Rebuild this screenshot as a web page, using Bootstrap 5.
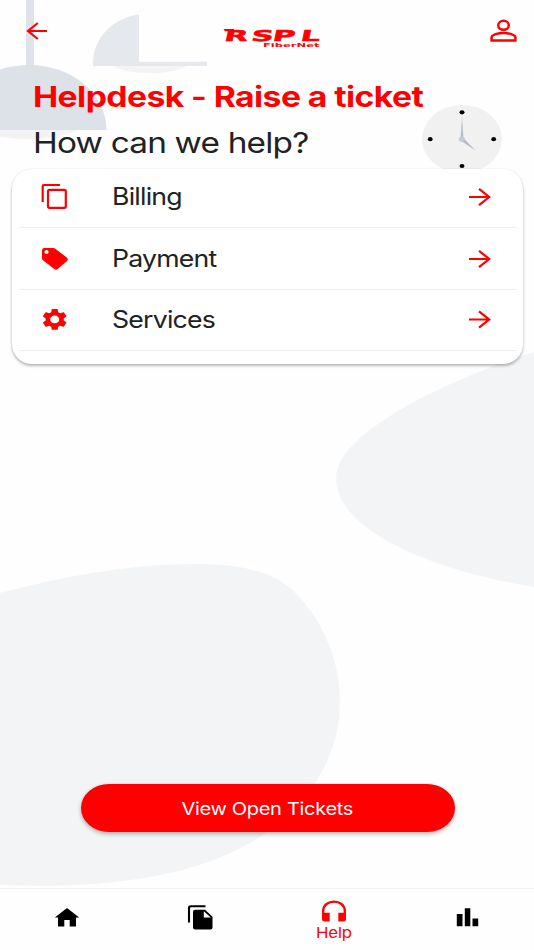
<!DOCTYPE html>
<html lang="en">
<head>
<meta charset="utf-8">
<meta name="viewport" content="width=device-width, initial-scale=1">
<title>Helpdesk</title>
<link href="https://cdn.jsdelivr.net/npm/bootstrap@5.3.0/dist/css/bootstrap.min.css" rel="stylesheet">
<style>
body{font-family:Inter,"Liberation Sans",sans-serif;color:#212323;background:#fefefe}
.screen{height:950px;overflow:hidden}
.backdrop{z-index:0}
.layer{z-index:1}
svg{display:block;flex:none}
.wide{display:inline-block;white-space:nowrap;transform-origin:0 50%}
.brand-red{color:#f00}
.topbar{height:76px;padding:19px 17px 0 25px}
.logo{margin-left:4px;margin-top:6px}
.page-title{font-size:28.5px;line-height:42px;font-weight:700;height:42px;letter-spacing:-.5px;transform:scaleX(1.183)}
.page-sub{font-size:29px;line-height:50px;height:50px;letter-spacing:-.7px;transform:scaleX(1.15)}
.titles{padding-left:32.500px;height:93px}
.panel{margin:0 11px 0 12px;height:195px;border-radius:20px;background:#fff;box-shadow:0 2px 3px rgba(0,0,0,.27),0 0 2px rgba(0,0,0,.1);overflow:hidden;padding:0 7px}
.panel .list-group{margin-top:-2.500px}
.panel .topic{height:61.5px;border:0;border-bottom:1px solid #efefef;border-radius:0;padding:1px 25px 0 20px;background:transparent;color:#212323}
.topic-icon{width:73px}
.topic-name{font-size:24px;letter-spacing:-.7px;transform:scaleX(1.11)}
.spacer{height:420px}
.open-btn{width:374px;height:48px;margin-left:80.5px;border-radius:28px/24px;background:#f00;color:#fff;box-shadow:0 2px 4px rgba(0,0,0,.3);border:0;padding:2px 0 0}
.open-btn:hover{background:#e60000;color:#fff}
.open-btn .wide{font-size:17.6px;letter-spacing:-.3px;transform-origin:50% 50%;transform:scaleX(1.14)}
.tabs{height:62px;margin-top:56px;background:#fefefe;border-top:1.5px solid #f3f3f3}
.tabs a{color:#000;text-decoration:none;padding-top:15px}
.tabs .help-tab{color:#f00;padding-top:1px}
.help-label{font-size:15px;line-height:18px;letter-spacing:-.2px;transform-origin:50% 50%;transform:scaleX(1.12)}
</style>
</head>
<body>
<div class="screen position-relative">
  <svg class="backdrop position-absolute top-0 start-0" width="534" height="950" viewBox="0 0 534 950">
    <ellipse cx="28" cy="117" rx="62" ry="22" fill="#f3f3f3"/>
    <path d="M26 0H34V66H26Z" fill="#dee3e9"/>
    <path d="M-49 130C-49 94-15 65 29 65C72 65 106.500 94 106.500 130Z" fill="#dde2e9"/>
    <path d="M112 65C125 76 175 76 188 65Z" fill="#f4f4f4"/>
    <path d="M139 14.500V61.700H207V66H93C92 39 112 18 139 14.500Z" fill="#e5e9ee"/>
    <ellipse cx="462" cy="139" rx="40" ry="34" fill="#f1f1f1"/>
    <ellipse cx="462" cy="112.300" rx="2.500" ry="2.100"/><ellipse cx="430.200" cy="139.200" rx="2.400" ry="2.100"/>
    <ellipse cx="493.700" cy="139.200" rx="2.400" ry="2.100"/><ellipse cx="462" cy="166" rx="2.500" ry="2.100"/>
    <path d="M462 116L463.400 138L475.500 150.500L460.500 140.500Z" fill="#b4bdc9"/>
    <ellipse cx="461.800" cy="139.200" rx="3" ry="2.700" fill="#c3cbd4"/>
    <path d="M534 352C470 372 336 428 336 478C336 530 430 570 534 587Z" fill="#f3f4f6"/>
    <path d="M0 593C60 577 130 564 195 564C245 564 273 573 291 589C320 615 340 657 340 702C340 760 305 811 250 843C190 878 100 889 0 885Z" fill="#f3f4f6"/>
  </svg>

  <div class="layer position-relative">
    <header class="topbar d-flex justify-content-between align-items-start">
      <a href="#" aria-label="Back"><svg width="24" height="24" viewBox="0 0 24 24" fill="none" stroke="#f00" stroke-width="2.200"><path d="M22 12H3M12.800 4L3 12L12.800 20"/></svg></a>
      <svg class="logo" width="100" height="24" viewBox="0 0 100 24" fill="#f00" font-family="DejaVu Sans,sans-serif" font-weight="700">
        <text transform="translate(1.500 15.500) skewX(-12) scale(2.050 1)" x="0 13.200 23.500 37.200" y="0" font-size="15" stroke="#f00" stroke-width=".5">RSPL</text>
        <path d="M1.500 4H12V6.200H3Z"/>
        <text x="41" y="22" font-size="5.400" textLength="56.500" lengthAdjust="spacingAndGlyphs">FiberNet</text>
      </svg>
      <a href="#" aria-label="Profile"><svg width="27" height="24" viewBox="0 0 27 24" fill="none" stroke="#f00" stroke-width="2.500"><ellipse cx="13.500" cy="6.300" rx="5.300" ry="4.500"/><path d="M1.600 21.600V18.600C1.600 15.500 8.500 13.900 13.500 13.900S25.400 15.500 25.400 18.600V21.600Z"/></svg></a>
    </header>

    <div class="titles">
      <div><h1 class="wide page-title brand-red mb-0">Helpdesk - Raise a ticket</h1></div>
      <div><h2 class="wide page-sub fw-normal mb-0">How can we help?</h2></div>
    </div>

    <main>
      <div class="panel">
        <div class="list-group">
          <a href="#" class="list-group-item topic d-flex align-items-center">
            <span class="topic-icon"><svg width="32" height="28" viewBox="0 0 32 28" fill="none" stroke="#f00" stroke-width="2.200"><path d="M21 2H5Q3.700 2 3.700 3.300V19"/><rect x="9" y="6.800" width="17.800" height="18" rx="1.500"/></svg></span>
            <span class="wide topic-name">Billing</span>
            <svg class="ms-auto" width="22" height="20" viewBox="0 0 22 20" fill="none" stroke="#f00" stroke-width="2.200"><path d="M0 10H20M10 1.800L20.200 10L10 18.200"/></svg>
          </a>
          <a href="#" class="list-group-item topic d-flex align-items-center">
            <span class="topic-icon"><svg width="32" height="28" viewBox="0 0 32 28"><path fill="#f00" fill-rule="evenodd" d="M5.500 3H14Q15.500 3 16.600 3.900L28 12.700Q29.800 14.300 28 15.900L18.800 24Q17 25.300 15.200 24L4 15.300Q3 14.500 3 13.200V5.200Q3 3 5.500 3ZM7.500 5A2.100 1.900 0 1 0 7.500 8.800A2.100 1.900 0 1 0 7.500 5Z"/></svg></span>
            <span class="wide topic-name">Payment</span>
            <svg class="ms-auto" width="22" height="20" viewBox="0 0 22 20" fill="none" stroke="#f00" stroke-width="2.200"><path d="M0 10H20M10 1.800L20.200 10L10 18.200"/></svg>
          </a>
          <a href="#" class="list-group-item topic d-flex align-items-center">
            <span class="topic-icon"><svg width="32" height="28" viewBox="0 0 32 28"><g transform="translate(.6 .5) scale(1.260 1.080)"><path fill="#f00" d="M19.140 12.940c.04-.3.060-.61.060-.94 0-.32-.02-.64-.07-.94l2.030-1.580c.18-.14.230-.41.120-.61l-1.920-3.320c-.12-.22-.37-.29-.59-.22l-2.390.960c-.5-.38-1.030-.7-1.620-.94L14.400 2.810c-.04-.24-.24-.41-.48-.41h-3.840c-.24 0-.43.170-.47.410L9.250 5.350c-.59.240-1.130.570-1.620.940L5.240 5.330c-.22-.08-.47 0-.59.220L2.740 8.870c-.12.210-.08.470.120.610l2.030 1.580c-.05.300-.09.630-.09.940s.02.640.07.940l-2.030 1.580c-.18.140-.23.410-.12.610l1.920 3.320c.12.220.370.290.590.220l2.390-.96c.5.380 1.030.700 1.620.940l.36 2.540c.05.240.24.410.480.410h3.840c.24 0 .44-.17.470-.41l.36-2.540c.59-.24 1.130-.56 1.620-.94l2.390.960c.22.080.470 0 .590-.22l1.920-3.320c.12-.22.070-.47-.12-.61l-2.010-1.580zM12 15.600c-1.980 0-3.600-1.620-3.600-3.600s1.620-3.600 3.600-3.600 3.600 1.620 3.600 3.600-1.620 3.600-3.600 3.600z"/></g></svg></span>
            <span class="wide topic-name">Services</span>
            <svg class="ms-auto" width="22" height="20" viewBox="0 0 22 20" fill="none" stroke="#f00" stroke-width="2.200"><path d="M0 9.500H20M10 1.300L20.200 9.500L10 17.700"/></svg>
          </a>
        </div>
      </div>
      <div class="spacer"></div>
      <button class="btn open-btn d-flex align-items-center justify-content-center"><span class="wide">View Open Tickets</span></button>
    </main>

    <nav class="tabs row g-0">
      <a href="#" aria-label="Home" class="col d-flex justify-content-center"><svg width="26" height="24" viewBox="0 0 26 24"><path d="M13 4L.8 13.500H4V22.500H10.300V16H15.700V22.500H22V13.500H25.200Z"/></svg></a>
      <a href="#" aria-label="Documents" class="col d-flex justify-content-center"><svg width="26" height="28" viewBox="0 0 26 28"><path d="M18.500 2.200H4Q2 2.200 2 4V18.500" fill="none" stroke="#000" stroke-width="2.100"/><path d="M8 5.800H18L25.500 12.800V23.500Q25.500 25.500 23.500 25.500H8Q6 25.500 6 23.500V7.800Q6 5.800 8 5.800ZM16.800 7.200V13.500H23.800Z" fill-rule="evenodd"/></svg></a>
      <a href="#" class="help-tab col d-flex flex-column align-items-center"><svg width="26" height="34" viewBox="0 0 26 34"><path d="M2.200 24V21C2.200 8.500 23.800 8.500 23.800 21V24" fill="none" stroke="#f00" stroke-width="2.300"/><path d="M1 22.700H8.700V31.500H4Q1 31.500 1 29ZM17.300 22.700H25V29Q25 31.500 22 31.500H17.300Z" fill="#f00"/></svg><span class="wide help-label">Help</span></a>
      <a href="#" aria-label="Usage" class="col d-flex justify-content-center"><svg width="24" height="24" viewBox="0 0 24 24"><path d="M1.800 10H7.500V22.300H1.800ZM9.800 4.300H15.300V22.300H9.800ZM17.500 14.400H23.200V22.300H17.500Z"/></svg></a>
    </nav>
  </div>
</div>
<script src="https://cdn.jsdelivr.net/npm/bootstrap@5.3.0/dist/js/bootstrap.bundle.min.js"></script>
</body>
</html>
